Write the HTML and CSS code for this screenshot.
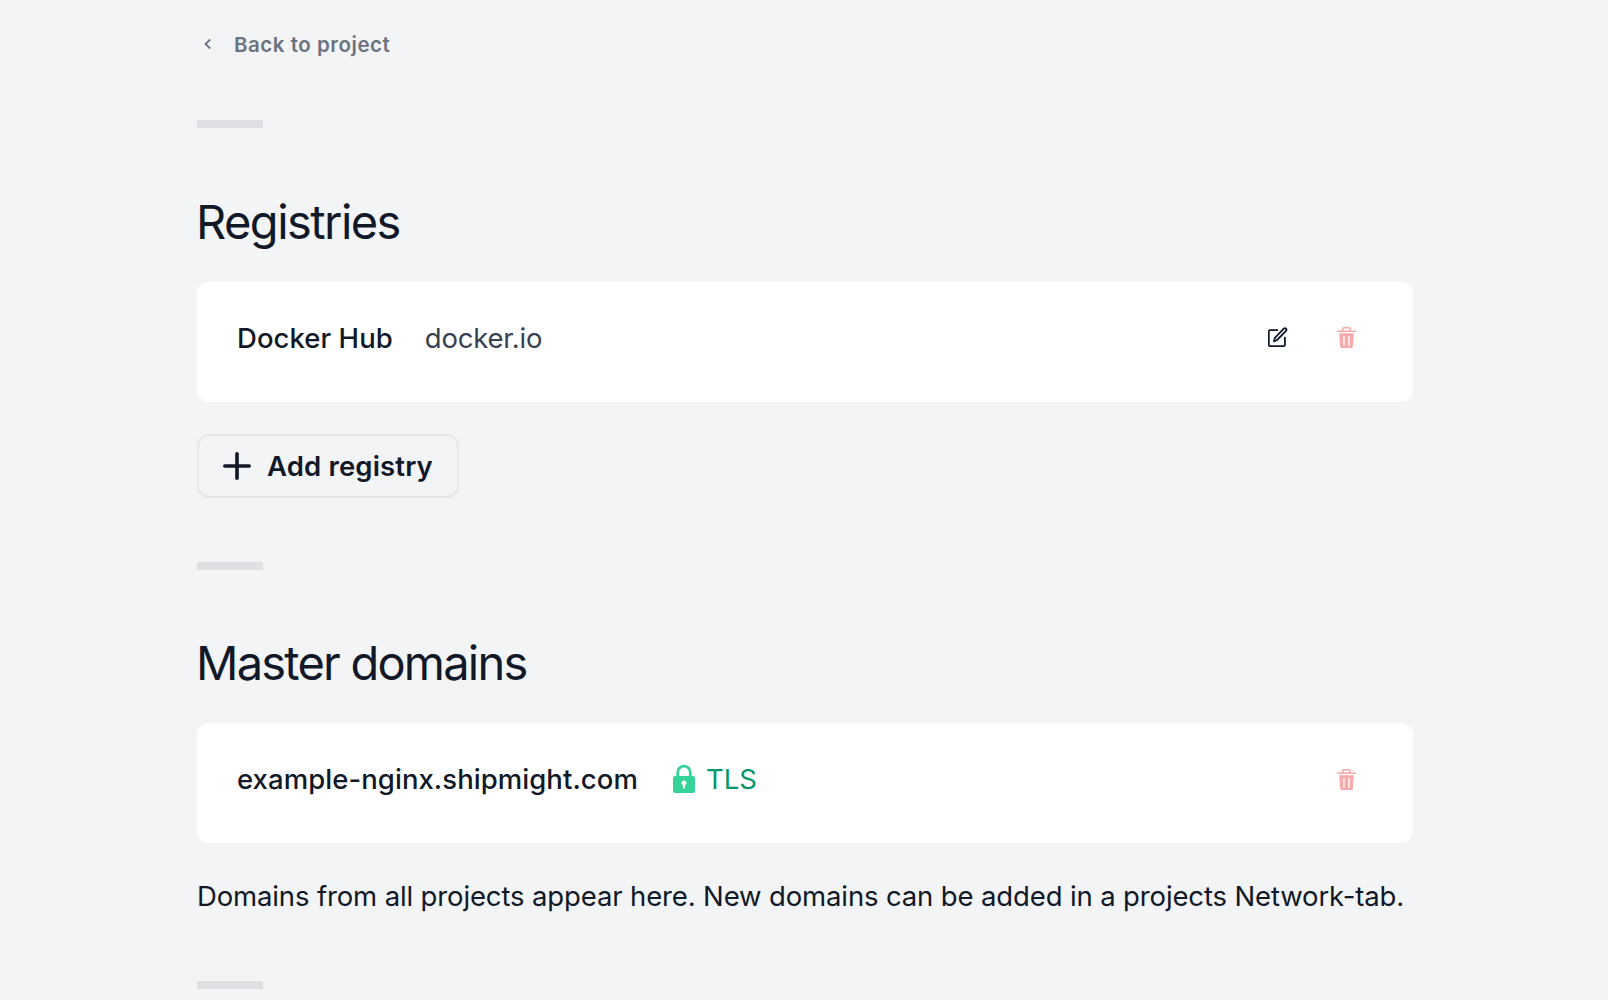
FILE: index.html
```html
<!DOCTYPE html>
<html lang="en">
<head>
<meta charset="utf-8">
<title>Project settings</title>
<link rel="stylesheet" href="styles.css">
</head>
<body>
<svg class="sprite" aria-hidden="true">
  <symbol id="trash" viewBox="0 0 19 21">
    <path d="M0 4.2h19M5.8 4V1.7q0-.9.9-.9h5.6q.9 0 .9.9V4" fill="none" stroke="currentColor" stroke-width="1.6"/>
    <path fill="currentColor" fill-rule="evenodd" d="M2.2 6.3h14.6l-.9 13.3q-.1 1.4-1.5 1.4H4.6q-1.4 0-1.5-1.4zM6.2 9v10h1.4V9zm5 0v10h1.4V9z"/>
  </symbol>
</svg>
<main class="page">
  <a class="back">
    <svg class="back-icon" viewBox="0 0 8 12"><path d="M6.2 1.5 1.5 6l4.7 4.5"/></svg>
    <span>Back to project</span>
  </a>
  <hr class="rule">
  <section class="section section-first">
    <h2 class="title">Registries</h2>
    <div class="card">
      <span class="name">Docker Hub</span>
      <span class="host">docker.io</span>
      <div class="actions">
        <svg class="edit" viewBox="0 0 20 20"><path d="M9.4 3.1H2.3Q.8 3.1.8 4.6v13.1q0 1.5 1.5 1.5h13.1q1.5 0 1.5-1.5v-7.1"/><path d="m6 14.3.9-3.5 8.9-9.1q1.1-1 2.2 0 1 1.1 0 2.2l-8.9 9.1z"/></svg>
        <svg class="trash"><use href="#trash"/></svg>
      </div>
    </div>
    <button class="add">
      <svg class="plus" viewBox="0 0 28 28"><path d="M14 1.8v24.4M1.8 14h24.4"/></svg>
      <span>Add registry</span>
    </button>
  </section>
  <hr class="rule">
  <section class="section section-domains">
    <h2 class="title">Master domains</h2>
    <div class="card">
      <span class="name">example-nginx.shipmight.com</span>
      <span class="tls">
        <svg class="lock" viewBox="0 0 22 28"><path d="M4.7 12V7.5a6.3 6.3 0 0 1 12.6 0V12" fill="none" stroke="currentColor" stroke-width="2.8"/><path fill="currentColor" fill-rule="evenodd" d="M2.2 11h17.6q2.2 0 2.2 2.2v12.6q0 2.2-2.2 2.2H2.2Q0 28 0 25.800V13.200Q0 11 2.200 11zM9.900 20.200V23.500h2.200v-3.300a2.500 2.500 0 1 0-2.200 0z"/></svg>
        <span>TLS</span>
      </span>
      <div class="actions">
        <svg class="trash"><use href="#trash"/></svg>
      </div>
    </div>
    <p class="note">Domains from all projects appear here. New domains can be added in a projects Network-tab.</p>
  </section>
  <hr class="rule">
</main>
</body>
</html>
```
FILE: styles.css
```css
* { box-sizing: border-box; }
html { overflow: hidden; }
body {
  margin: 0;
  height: 1000px;
  overflow: hidden;
  background: #f3f4f6;
  color: #111827;
  font-family: Inter, "Liberation Sans", sans-serif;
  font-size: 27.5px;
  line-height: 40px;
}
.sprite { display: none; }
.page { width: 1216px; margin-left: 197px; padding-top: 28px; }
.back {
  display: flex;
  align-items: center;
  gap: 22px;
  height: 32px;
  padding-left: 7px;
  color: #6b7280;
  font-size: 20.5px;
  font-weight: 600;
  letter-spacing: .026em;
}
.back span { padding-top: 2px; }
.back-icon { width: 8px; height: 12px; fill: none; stroke: currentColor; stroke-width: 1.8; }
.rule { width: 66px; height: 8px; margin: 0; border: 0; background: #dfe0e4; }
.back + .rule { margin-top: 60px; }
.section { padding: 64px 0; }
.section-first { padding-top: 65px; }
.title {
  margin: 0 0 32px -1px;
  font-size: 47px;
  font-weight: 400;
  line-height: 57px;
  letter-spacing: -1.55px;
}
.section-domains .title { letter-spacing: -1.78px; }
.card {
  display: flex;
  height: 120px;
  padding: 36px 57px 0 40px;
  border-radius: 12px;
  background: #fff;
}
.name { font-weight: 500; letter-spacing: .06px; }
.host { margin-left: 32px; color: #374151; letter-spacing: -.2px; }
.actions { display: flex; align-items: center; gap: 49px; height: 38px; margin-left: auto; }
.section-domains .actions { height: 40px; }
.edit { width: 20px; height: 20px; fill: none; stroke: #111827; stroke-width: 1.8; stroke-linejoin: round; stroke-linecap: round; }
.trash { width: 19px; height: 21px; color: #f6aaaa; }
.tls { display: flex; align-items: center; gap: 11px; height: 40px; margin-left: 35px; color: #059669; }
.lock { width: 22px; height: 28px; color: #34d399; }
.add {
  display: flex;
  align-items: center;
  gap: 16px;
  width: 262px;
  height: 64px;
  margin-top: 32px;
  padding: 0 24px;
  border: 2px solid #e5e7eb;
  border-radius: 12px;
  background: transparent;
  color: inherit;
  font: inherit;
  font-weight: 600;
  letter-spacing: .15px;
  white-space: nowrap;
}
.plus { width: 28px; height: 28px; flex: none; fill: none; stroke: currentColor; stroke-width: 3.6; stroke-linecap: round; }
.note { margin: 33px 0 1px; white-space: nowrap; letter-spacing: -.135px; }
```
